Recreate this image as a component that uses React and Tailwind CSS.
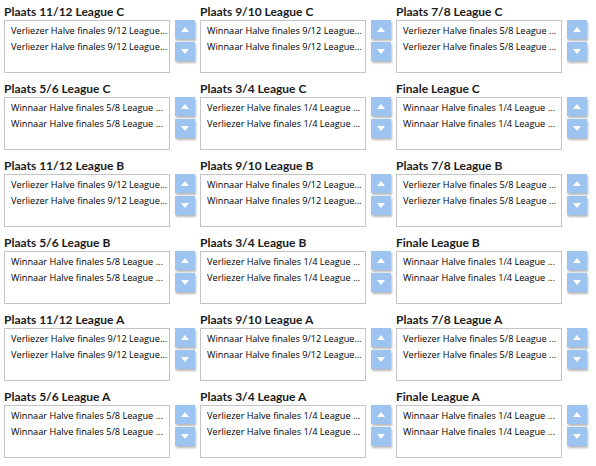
const leagues = ['C', 'B', 'A'];

const rowsFor = (l) => [
  [
    { title: `Plaats 11/12 League ${l}`, item: 'Verliezer Halve finales 9/12 League...' },
    { title: `Plaats 9/10 League ${l}`, item: 'Winnaar Halve finales 9/12 League...' },
    { title: `Plaats 7/8 League ${l}`, item: 'Verliezer Halve finales 5/8 League ...' },
  ],
  [
    { title: `Plaats 5/6 League ${l}`, item: 'Winnaar Halve finales 5/8 League ...' },
    { title: `Plaats 3/4 League ${l}`, item: 'Verliezer Halve finales 1/4 League ...' },
    { title: `Finale League ${l}`, item: 'Winnaar Halve finales 1/4 League ...' },
  ],
];

const Arrow = ({ down }) => (
  <svg width="8" height="5" viewBox="0 0 8 5">
    <path d={down ? 'M0 0h8L4 5z' : 'M0 5h8L4 0z'} fill="#fff" />
  </svg>
);

const MatchSlot = ({ title, item }) => (
  <div className="w-[196px]">
    <div className="h-[17px] leading-[17px] text-[12px] font-bold text-[#1b1b1b] whitespace-nowrap font-['Lato',sans-serif]">{title}</div>
    <div className="flex">
      <div className="w-[166px] h-[53px] border border-[#c4c4c4] bg-white pt-[2px] pl-[6px]">
        {[0, 1].map((i) => (
          <div key={i} className="h-[16px] leading-[16px] text-[9.2px] text-black whitespace-nowrap overflow-hidden">
            {item}
          </div>
        ))}
      </div>
      <div className="ml-[5px] flex flex-col gap-[3px]">
        <button className="w-[20px] h-[19px] bg-[#9dc3f1] flex items-center justify-center shadow-[1px_2px_2px_rgba(0,0,0,0.28)]">
          <Arrow />
        </button>
        <button className="w-[20px] h-[19px] bg-[#9dc3f1] flex items-center justify-center shadow-[1px_2px_2px_rgba(0,0,0,0.28)]">
          <Arrow down />
        </button>
      </div>
    </div>
  </div>
);

export default function App() {
  return (
    <div className="w-[596px] h-[466px] bg-white pl-[4px] pt-[3px] font-['Open_Sans',sans-serif] flex flex-col gap-y-[7px]">
      {leagues.flatMap((l) => rowsFor(l)).map((row, r) => (
        <div key={r} className="flex">
          {row.map((s) => (
            <MatchSlot key={s.title} {...s} />
          ))}
        </div>
      ))}
    </div>
  );
}
